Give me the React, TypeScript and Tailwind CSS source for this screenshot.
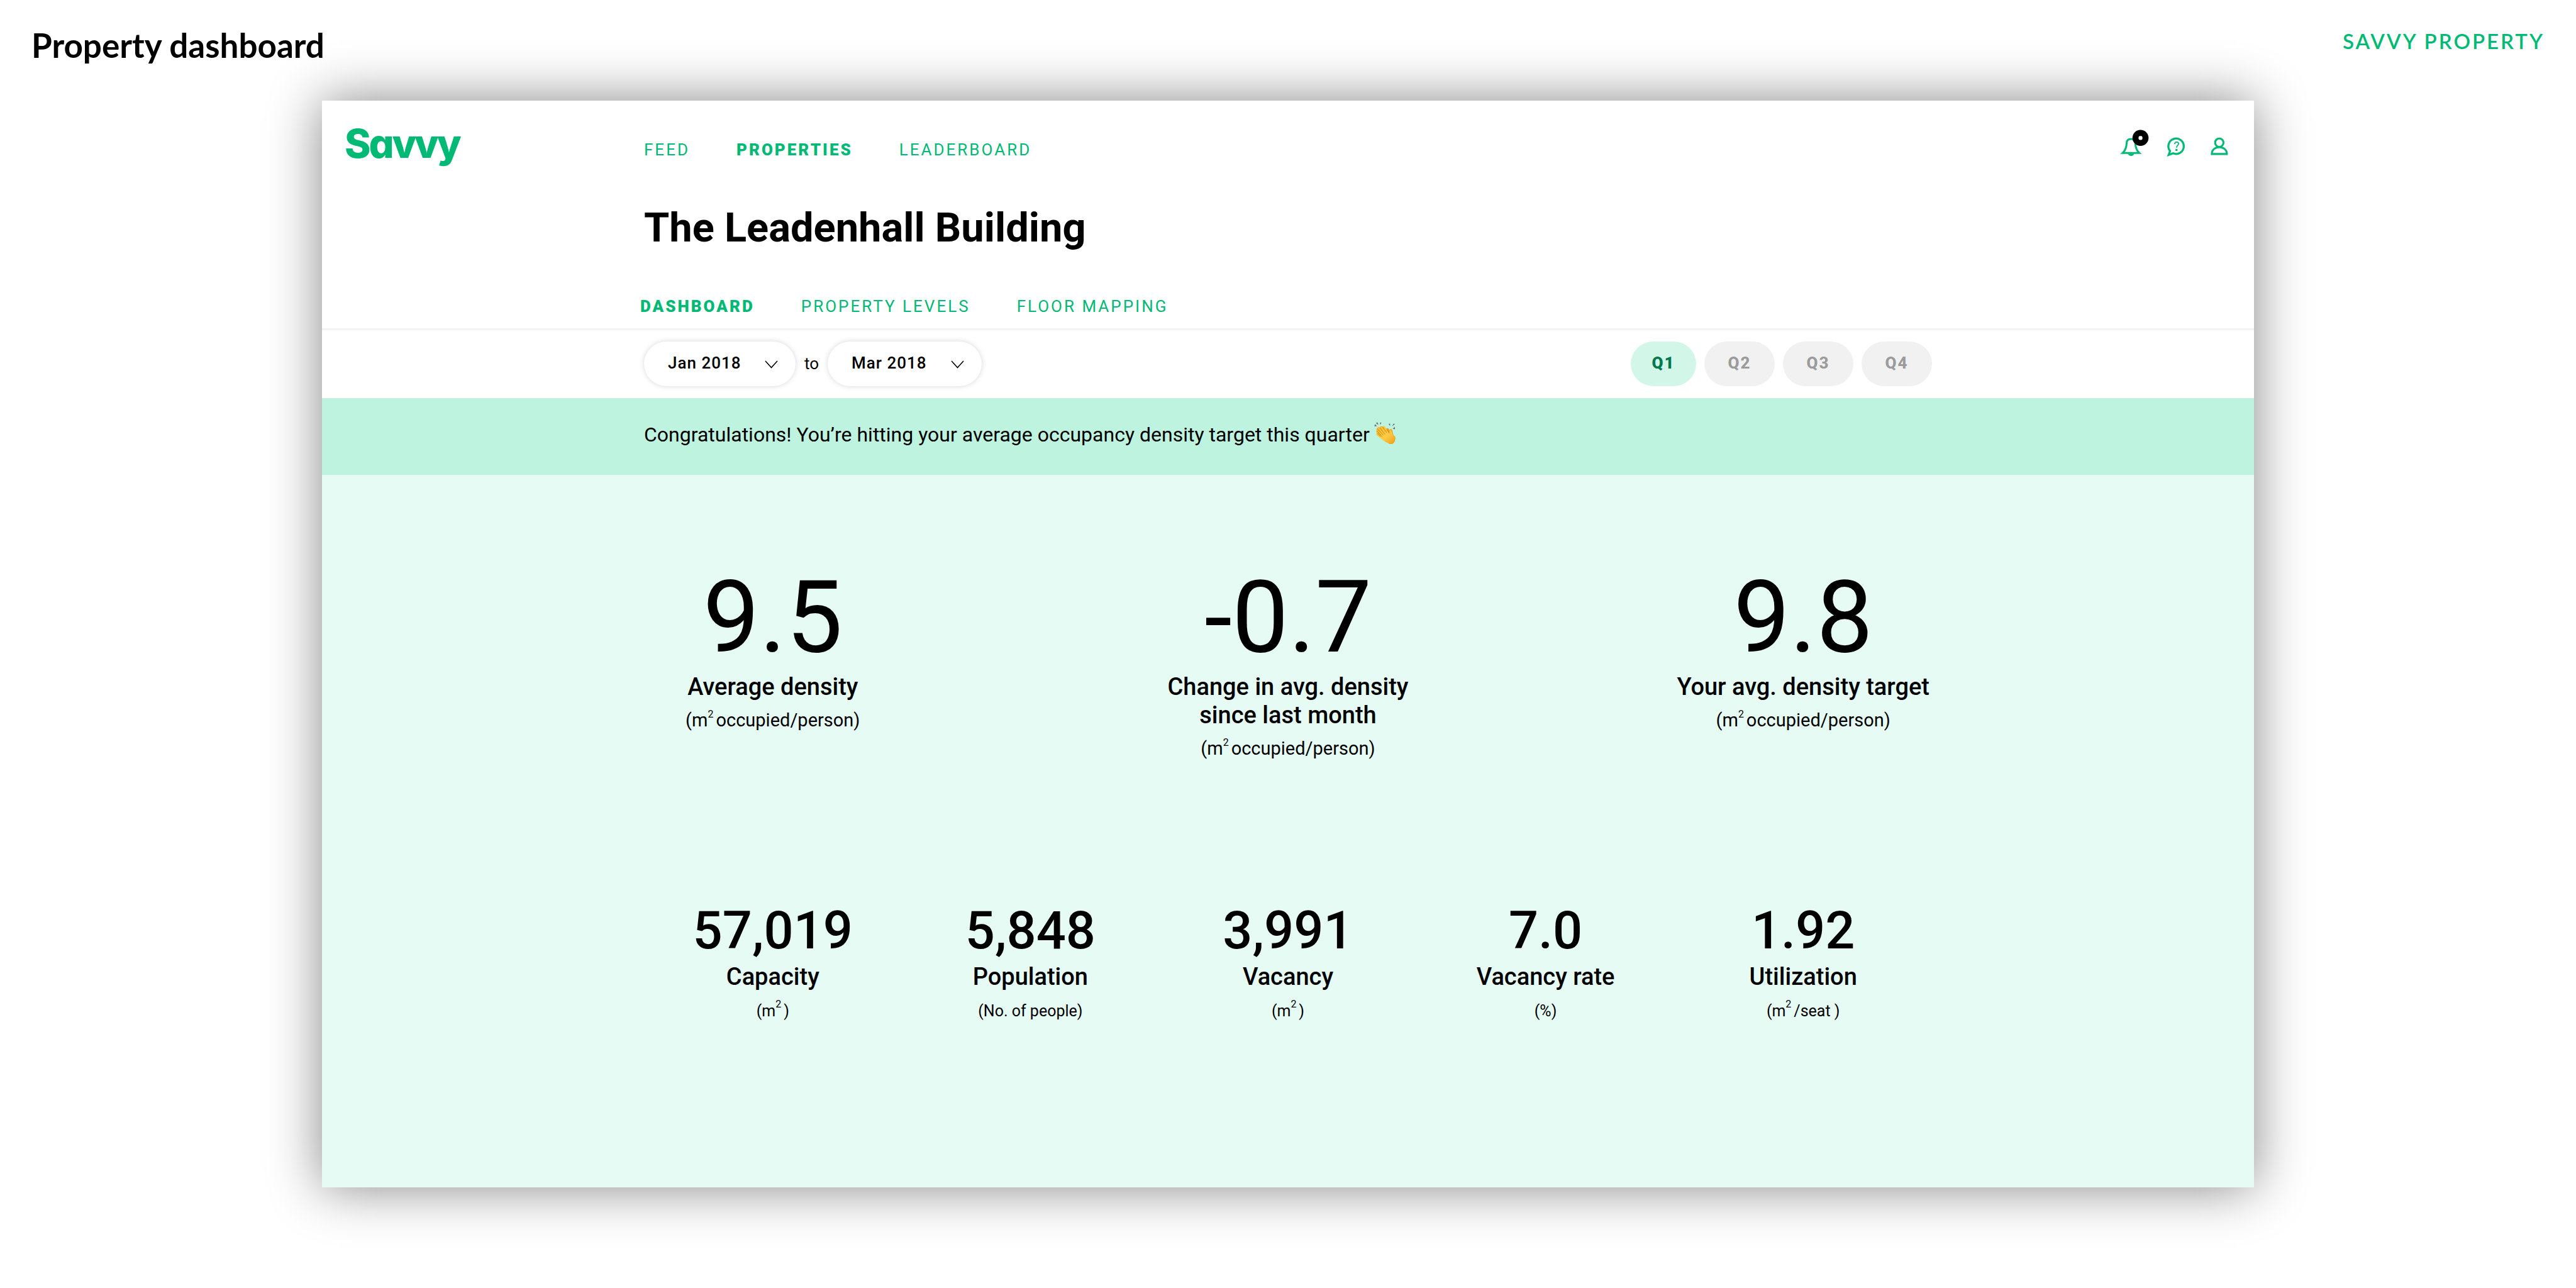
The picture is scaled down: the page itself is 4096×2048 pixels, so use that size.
import type { ReactNode } from "react";

type Stat = { value: string; label: string; unit: ReactNode };

const Squared = () => <sup className="top-0 align-[14px] text-[16px]">{"2 "}</sup>;

const densityUnit = (
  <>
    (m
    <Squared />
    occupied/person)
  </>
);

const densityStats: Stat[] = [
  { value: "9.5", label: "Average density", unit: densityUnit },
  { value: "-0.7", label: "Change in avg. density since last month", unit: densityUnit },
  { value: "9.8", label: "Your avg. density target", unit: densityUnit },
];

const spaceStats: Stat[] = [
  { value: "57,019", label: "Capacity", unit: <>(m<Squared />)</> },
  { value: "5,848", label: "Population", unit: "(No. of people)" },
  { value: "3,991", label: "Vacancy", unit: <>(m<Squared />)</> },
  { value: "7.0", label: "Vacancy rate", unit: "(%)" },
  { value: "1.92", label: "Utilization", unit: <>(m<Squared />/seat )</> },
];

function BellIcon() {
  return (
    <svg viewBox="100 60 270 270" className="h-[46px] w-[46px]" aria-hidden="true">
      <path
        d="M124 285C150 262 160 235 162 190C163 166 178 154 202 154C226 154 240 166 242 190C244 235 254 262 280 285Z"
        fill="none"
        stroke="currentColor"
        strokeWidth="18"
        strokeLinejoin="miter"
      />
      <path d="M174 292H232C228 305 217 312 203 312C189 312 178 305 174 292Z" fill="currentColor" />
      <circle cx="291" cy="144" r="75" fill="#000" />
      <rect x="273" y="126" width="36" height="36" rx="13" fill="#fff" />
    </svg>
  );
}

function HelpIcon() {
  return (
    <svg viewBox="530 60 188 270" className="h-[46px] w-8" aria-hidden="true">
      <path
        d="M568 266A72 72 0 1 1 597 288L555 303Z"
        fill="none"
        stroke="currentColor"
        strokeWidth="19"
      />
      <path
        d="M612 201C612 189 619 182 630 182C641 182 648 189 648 199C648 214 629 212 629 234"
        fill="none"
        stroke="currentColor"
        strokeWidth="10"
      />
      <rect x="619" y="247" width="19" height="19" fill="currentColor" />
    </svg>
  );
}

function PersonIcon() {
  return (
    <svg viewBox="940 60 176 270" className="h-[46px] w-[30px]" aria-hidden="true">
      <g fill="none" stroke="currentColor" strokeWidth="18">
        <circle cx="1027" cy="188" r="39" />
        <path d="M957 294C957 255 988 230 1027 230C1066 230 1098 255 1098 294Z" />
      </g>
    </svg>
  );
}

function ClapIcon() {
  return (
    <svg viewBox="0 0 67 69" className="h-[35px] w-[34px]" role="img" aria-label="Clapping hands">
      <defs>
        <linearGradient id="palm" x1="0" y1="0" x2="1" y2="1">
          <stop offset="0" stopColor="#fbb829" />
          <stop offset="0.55" stopColor="#ffcc47" />
          <stop offset="1" stopColor="#f0a01d" />
        </linearGradient>
      </defs>
      <g fill="#6c6c6c">
        <path d="M2 7L9 13L1 14Z" />
        <path d="M9 0L14 8L6 6Z" />
        <path d="M18 2L23 2L19 9Z" />
        <path d="M45 6L50 5L50 13Z" />
        <path d="M61 5L65 7L56 14Z" />
        <path d="M65 16V23L58 20Z" />
      </g>
      <path
        d="M36 24C38 18 43 18 46 22L49 25C51 20 56 22 57 27L60 40L66 47C69 55 62 68 56 69H47L42 62Z"
        fill="#eda41f"
      />
      <path
        d="M9 20C10 15 15 15 18 18C18 12 23 11 26 15C29 11 33 13 35 17L48 37C48 31 47 26 50 25C54 25 56 32 58 39L65 48C66 56 60 66 54 68C46 67 32 62 24 54L9 42C5 38 7 35 10 35C5 31 5 28 9 27C6 24 7 21 9 20Z"
        fill="url(#palm)"
      />
      <path
        d="M10 21L28 41M18 18L33 38M26 15L39 33M9 28L24 45M10 35L20 45M41 24L47 34"
        fill="none"
        stroke="#c07f10"
        strokeWidth="1.8"
        strokeLinecap="round"
      />
    </svg>
  );
}

function MonthSelect({ label, value, width }: { label: string; value: string; width: string }) {
  return (
    <div className={`relative ${width}`}>
      <select
        aria-label={label}
        defaultValue={value}
        className="h-[71px] w-full appearance-none rounded-full bg-white pb-[2px] pl-[38px] text-[26px] font-medium tracking-[1px] shadow-[0_0_8px_rgba(0,0,0,0.16)]"
      >
        <option>{value}</option>
      </select>
      <svg
        viewBox="0 0 21 13"
        className="pointer-events-none absolute top-[30px] right-[28px] h-[13px] w-[21px]"
        aria-hidden="true"
      >
        <path d="M1 1L10.500 11.500L20 1" fill="none" stroke="#000" strokeWidth="1.6" />
      </svg>
    </div>
  );
}

function NavLink({ children, current = false }: { children: string; current?: boolean }) {
  return (
    <a
      href="#"
      aria-current={current ? "page" : undefined}
      className={
        current
          ? "text-[26px] leading-8 font-black tracking-[3px]"
          : "text-[26px] leading-8 tracking-[3px]"
      }
    >
      {children}
    </a>
  );
}

export default function App() {
  return (
    <div className="min-h-screen bg-white pb-[160px] font-['Roboto',sans-serif] text-black">
      <header className="flex h-[160px] items-start justify-between px-[50px] pt-10 font-['Lato',sans-serif]">
        <h2 className="text-[53px] leading-[64px] font-bold">Property dashboard</h2>
        <p className="pt-[5px] text-[33px] leading-10 font-semibold tracking-[3px] text-[#00b975]">
          SAVVY PROPERTY
        </p>
      </header>

      <main className="mx-auto w-3/4 bg-[#e5fbf4] shadow-[0_0_80px_rgba(0,0,0,0.48)]">
        <div className="border-b-[3px] border-[#f4f4f4] bg-white pb-[19px] text-[#00b975]">
          <div className="grid h-[136px] grid-cols-[1fr_4fr_1fr] items-center">
            <a
              href="#"
              className="pl-[36px] font-['Inter',sans-serif] text-[63px] leading-[80px] font-extrabold tracking-tighter [font-feature-settings:'cv11']"
            >
              Savvy
            </a>
            <nav aria-label="Main" className="flex gap-[74px] pt-5">
              <NavLink>FEED</NavLink>
              <NavLink current>PROPERTIES</NavLink>
              <NavLink>LEADERBOARD</NavLink>
            </nav>
            <div className="flex justify-end pr-10">
              <button type="button" aria-label="Notifications" className="mr-[27px]">
                <BellIcon />
              </button>
              <button type="button" aria-label="Help" className="mr-[38px]">
                <HelpIcon />
              </button>
              <button type="button" aria-label="Account">
                <PersonIcon />
              </button>
            </div>
          </div>
          <div className="mx-auto w-2/3">
            <h1 className="mt-[26px] text-[65px] leading-[80px] font-bold text-black">
              The Leadenhall Building
            </h1>
            <nav aria-label="Property" className="mt-[69px] -ml-[6px] flex gap-[74px]">
              <NavLink current>DASHBOARD</NavLink>
              <NavLink>PROPERTY LEVELS</NavLink>
              <NavLink>FLOOR MAPPING</NavLink>
            </nav>
          </div>
        </div>

        <div className="bg-white pt-[18px] pb-[19px]">
          <div className="mx-auto flex w-2/3 items-center justify-between">
            <div className="flex items-center gap-[14px]">
              <MonthSelect label="From month" value="Jan 2018" width="w-[241px]" />
              <span className="pb-[2px] text-[26px] leading-8">to</span>
              <MonthSelect label="To month" value="Mar 2018" width="w-[245px]" />
            </div>
            <div className="flex gap-[13px] text-[26px] tracking-[2px]">
              <button
                type="button"
                aria-pressed="true"
                className="h-[71px] w-[104px] rounded-full bg-[#d2f7e9] pb-[2px] font-black text-[#007a4d]"
              >
                Q1
              </button>
              {["Q2", "Q3", "Q4"].map((quarter) => (
                <button
                  key={quarter}
                  type="button"
                  aria-pressed="false"
                  className="h-[71px] w-[112px] rounded-full bg-[#f1f1f1] pb-[2px] font-extrabold text-[#9b9b9b]"
                >
                  {quarter}
                </button>
              ))}
            </div>
          </div>
        </div>

        <div className="bg-[#bef3df] pt-[38px] pb-[44px]">
          <p className="mx-auto flex w-2/3 gap-[7px] text-[32px] leading-10">
            Congratulations! You’re hitting your average occupancy density target this quarter
            <ClapIcon />
          </p>
        </div>

        <div className="mx-auto w-2/3 pt-[147px] pb-[264px] text-center">
          <section aria-label="Density" className="flex justify-between">
            {densityStats.map((stat) => (
              <div key={stat.value} className="w-1/5">
                <p className="text-[160px] leading-[160px]">{stat.value}</p>
                <h3 className="mt-2 text-[38px] leading-[45px] font-medium">{stat.label}</h3>
                <p className="mt-3 text-[29px] leading-9">{stat.unit}</p>
              </div>
            ))}
          </section>
          <section aria-label="Space" className="mt-[230px] grid grid-cols-5">
            {spaceStats.map((stat) => (
              <div key={stat.label}>
                <p className="text-[83px] leading-[84px] font-medium">{stat.value}</p>
                <h3 className="mt-[9px] text-[38px] leading-[45px] font-medium">{stat.label}</h3>
                <p className="mt-4 text-[25px] leading-8">{stat.unit}</p>
              </div>
            ))}
          </section>
        </div>
      </main>
    </div>
  );
}
